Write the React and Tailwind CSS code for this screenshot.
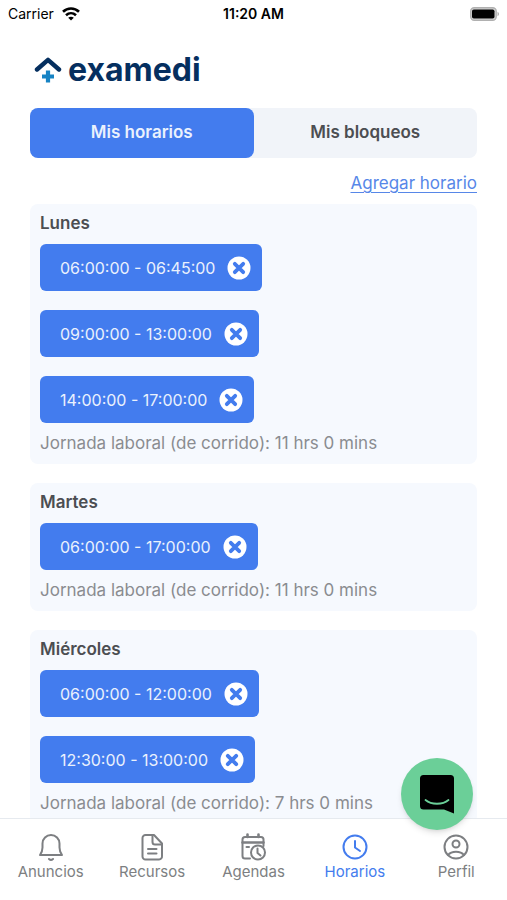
const dias = [
  {
    nombre: "Lunes",
    horarios: ["06:00:00 - 06:45:00", "09:00:00 - 13:00:00", "14:00:00 - 17:00:00"],
    jornada: "11 hrs 0 mins",
  },
  {
    nombre: "Martes",
    horarios: ["06:00:00 - 17:00:00"],
    jornada: "11 hrs 0 mins",
  },
  {
    nombre: "Miércoles",
    horarios: ["06:00:00 - 12:00:00", "12:30:00 - 13:00:00"],
    jornada: "7 hrs 0 mins",
  },
];

function NavIcon({ children }) {
  return (
    <svg
      viewBox="0 0 28 28"
      className="size-7"
      fill="none"
      stroke="currentColor"
      strokeWidth="2"
      strokeLinecap="round"
      strokeLinejoin="round"
      aria-hidden="true"
    >
      {children}
    </svg>
  );
}

const secciones = [
  {
    nombre: "Anuncios",
    icono: (
      <NavIcon>
        <path d="M3 22h22c-1.800-2.500-2.500-4.500-2.500-7.500V10.500a8.500 8.500 0 0 0-17 0v4c0 3-.7 5-2.500 7.500Z" />
        <path d="M12 26q2 1.800 4 0" />
      </NavIcon>
    ),
  },
  {
    nombre: "Recursos",
    icono: (
      <NavIcon>
        <path d="M7.500 2H16l8 8.500V23a3 3 0 0 1-3 3.500H7.500a3 3 0 0 1-3-3V5a3 3 0 0 1 3-3Z" />
        <path d="M14.500 2.500V9a2.500 2.500 0 0 0 2.500 2.500h6.500" />
        <path d="M10 16h8.500M10 20.500h8.500" />
      </NavIcon>
    ),
  },
  {
    nombre: "Agendas",
    icono: (
      <NavIcon>
        <path d="M11 25.500H6A2.500 2.500 0 0 1 3.500 23V6.500A2.500 2.500 0 0 1 6 4h16a2.500 2.500 0 0 1 2.500 2.500V13" />
        <path d="M3.500 9.500h21M8.500 1.500V4M19.500 1.500V4" strokeWidth="2.600" />
        <circle cx="19" cy="19.500" r="7" />
        <path d="M18.500 15.500v4.500l3 2.500" />
        <path d="M7.500 14H10" />
      </NavIcon>
    ),
  },
  {
    nombre: "Horarios",
    activa: true,
    icono: (
      <NavIcon>
        <circle cx="14" cy="14" r="11.500" />
        <path d="M14 8v6.500l5 3.500" />
      </NavIcon>
    ),
  },
  {
    nombre: "Perfil",
    icono: (
      <NavIcon>
        <circle cx="14" cy="14" r="11.500" />
        <circle cx="14" cy="11" r="3.500" />
        <path d="M6 22c3.500-4.500 12.500-4.500 16 0" />
      </NavIcon>
    ),
  },
];

function BarraEstado() {
  return (
    <div className="grid grid-cols-3 items-center px-2 h-7 text-sm text-black shrink-0">
      <div className="flex items-center gap-2">
        <span>Carrier</span>
        <svg viewBox="0 0 18 14" className="w-[18px] h-[14px]" fill="none" stroke="black" strokeWidth="2.6" aria-hidden="true">
          <path d="M1 4.800C5.500.4 12.500.4 17 4.800" />
          <path d="M4 8.200c3-2.700 7-2.700 10 0" />
          <path d="M9 13.500 6.200 10.700c1.600-1.300 4-1.300 5.600 0Z" fill="black" stroke="none" />
        </svg>
      </div>
      <span className="text-center font-semibold">11:20 AM</span>
      <svg viewBox="0 0 31 14" className="w-[31px] h-[14px] justify-self-end" aria-hidden="true">
        <rect x="2.700" y=".7" width="25.500" height="12.600" rx="3.500" fill="#d4d4d4" stroke="#b0b0b0" strokeWidth="1.400" />
        <rect x="4" y="2.500" width="22.500" height="9" rx="1.800" fill="black" />
        <path d="M29.500 4.800c2 .8 2 3.600 0 4.400Z" fill="#b0b0b0" />
      </svg>
    </div>
  );
}

function Logo() {
  return (
    <div className="flex items-center gap-[6px] h-[50px] text-[#052f5f]">
      <svg viewBox="0 0 28 28" className="size-7" fill="none" aria-hidden="true">
        <path d="M3 13.500 14 3.800 25 13.500" stroke="#052f5f" strokeWidth="4.400" strokeLinecap="round" strokeLinejoin="round" />
        <path d="M14 14.500v12M8 20.500h12" stroke="#1683c4" strokeWidth="4.200" />
      </svg>
      <span className="text-[32px] leading-10 font-bold">examedi</span>
    </div>
  );
}

function Horario({ rango }) {
  return (
    <li className="flex items-center gap-3 h-[47px] pl-5 pr-[11px] rounded-md bg-[#437cee] text-[#eaf1fd]">
      <span className="text-base">{rango}</span>
      <button type="button" aria-label={`Eliminar ${rango}`}>
        <svg viewBox="0 0 24 24" className="size-6" aria-hidden="true">
          <circle cx="12" cy="12" r="11.500" fill="white" />
          <path d="m7.800 7.800 8.400 8.400M16.200 7.800l-8.400 8.400" stroke="#437cee" strokeWidth="3.800" strokeLinecap="round" />
        </svg>
      </button>
    </li>
  );
}

function Dia({ nombre, horarios, jornada }) {
  return (
    <section className="rounded-lg bg-[#f6f9fe] px-[10px] pt-2 pb-[10px]">
      <h2 className="text-[17px] leading-[22px] font-semibold text-[#4c4e52]">{nombre}</h2>
      <ul className="mt-[10px] flex flex-col items-start gap-[19px]">
        {horarios.map((rango) => (
          <Horario key={rango} rango={rango} />
        ))}
      </ul>
      <p className="mt-[9px] text-[17px] leading-[22px] text-[#8a8c90]">
        Jornada laboral (de corrido): {jornada}
      </p>
    </section>
  );
}

export default function App() {
  return (
    <div className="relative flex flex-col h-screen bg-white font-['Inter','Liberation_Sans',sans-serif]">
      <BarraEstado />

      <main className="flex-1 min-h-0 overflow-y-auto [scrollbar-width:none] px-[30px] pt-[17px]">
        <div className="pl-1">
          <Logo />
        </div>

        <div className="mt-[13px] flex h-[50px] rounded-lg bg-[#f1f4f9] text-[17px] font-semibold">
          <button type="button" className="flex-1 rounded-lg bg-[#437cee] text-[#eaf1fd]">
            Mis horarios
          </button>
          <button type="button" className="flex-1 rounded-lg text-[#4c4e52]">
            Mis bloqueos
          </button>
        </div>

        <div className="mt-[14px] text-right text-[17px] leading-[22px]">
          <a href="#agregar" className="text-[#5787e8] underline underline-offset-3">
            Agregar horario
          </a>
        </div>

        <div className="mt-[10px] flex flex-col gap-[19px]">
          {dias.map((dia) => (
            <Dia key={dia.nombre} {...dia} />
          ))}
        </div>
      </main>

      <nav className="grid grid-cols-5 h-[82px] pt-[14px] shrink-0 border-t border-[#e6eaef] bg-white">
        {secciones.map(({ nombre, icono, activa }) => (
          <a
            key={nombre}
            href={`#${nombre.toLowerCase()}`}
            className={`flex flex-col items-center text-[15px] leading-[22px] ${activa ? "text-[#437cee]" : "text-[#7d7f82]"}`}
          >
            {icono}
            {nombre}
          </a>
        ))}
      </nav>

      <button
        type="button"
        aria-label="Abrir chat"
        className="absolute right-[34px] bottom-[70px] size-[72px] rounded-full bg-[#6bcf98] shadow-md flex items-center justify-center"
      >
        <svg viewBox="0 0 36 40" className="w-9 h-10" aria-hidden="true">
          <path d="M4.500 1h27A3.500 3.500 0 0 1 35 4.500V39.500L25 35.500H4.500A3.500 3.500 0 0 1 1 32V4.500A3.500 3.500 0 0 1 4.500 1Z" fill="black" />
          <path d="M6.500 26c6 5 17 5 23 0" fill="none" stroke="#6bcf98" strokeWidth="1.800" strokeLinecap="round" />
        </svg>
      </button>
    </div>
  );
}
